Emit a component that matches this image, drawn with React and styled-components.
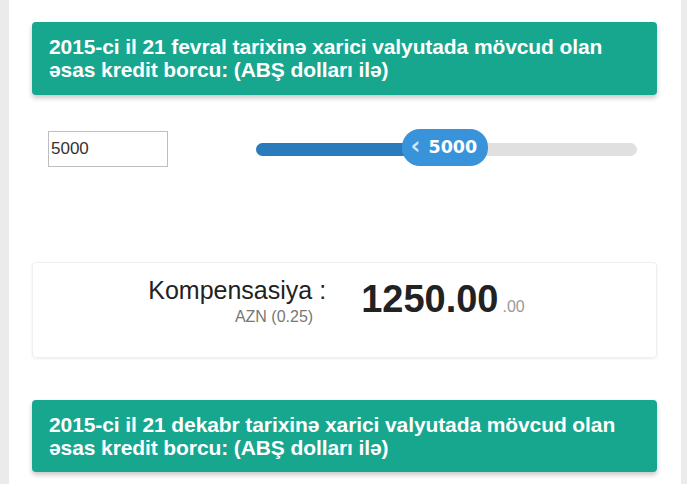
import React from "react";
import styled, { createGlobalStyle } from "styled-components";

const Global = createGlobalStyle`
  html, body { margin: 0; padding: 0; background: #ebebeb; }
  body { font-family: "Liberation Sans", Arial, sans-serif; overflow: hidden; }
  * { box-sizing: border-box; }
`;

const Panel = styled.div`
  margin: 0 6px 0 9px;
  background: #fff;
  min-height: 484px;
  padding: 22px 24px 0 23px;
  display: flex;
  flex-direction: column;
`;

const Header = styled.div`
  background: #17a68e;
  color: #fff;
  border-radius: 4px;
  box-shadow: 0 3px 5px rgba(0, 0, 0, 0.22);
  padding: ${(p) => (p.$tight ? "13px 17px 13px" : "13px 17px 14px")};
  font-weight: bold;
  font-size: 21px;
  line-height: 23px;
  letter-spacing: -0.1px;
`;

const SliderRow = styled.div`
  display: flex;
  align-items: center;
  margin-top: 33px;
  height: 39px;
`;

const NumberInput = styled.input`
  width: 120px;
  height: 36px;
  margin: 3px 0 0 16px;
  border: 1px solid #bdbdbd;
  padding: 0 2px;
  font-family: "Liberation Sans", Arial, sans-serif;
  font-size: 17px;
  color: #333;
  outline: none;
`;

const Track = styled.div`
  position: relative;
  margin-left: 88px;
  width: 381px;
  height: 13px;
  border-radius: 7px;
  background: #e0e0e0;
  margin-top: 3px;
`;

const Fill = styled.div`
  position: absolute;
  left: 0;
  top: 0;
  bottom: 0;
  border-radius: 7px 0 0 7px;
  background: #2a7bbd;
`;

const Handle = styled.div`
  position: absolute;
  top: -14px;
  height: 37px;
  width: 86px;
  border-radius: 18px;
  background: #3993da;
  color: #fff;
  display: flex;
  align-items: center;
  justify-content: center;
  gap: 8px;
  font-family: "DejaVu Sans", Verdana, sans-serif;
  font-weight: bold;
  font-size: 17.5px;
  padding-right: 2px;
`;

const Chevron = styled.span`
  color: #cfe5f8;
  font-size: 24px;
  line-height: 1;
  margin-top: -3px;
`;

const ResultCard = styled.div`
  margin-top: 95px;
  height: 96px;
  border: 1px solid #efefef;
  border-radius: 4px;
  box-shadow: 0 1px 3px rgba(0, 0, 0, 0.07);
  display: flex;
  justify-content: center;
  padding: 13px 0 0 0;
`;

const LabelCol = styled.div`
  display: flex;
  flex-direction: column;
  align-items: flex-end;
  margin-right: 35px;
  margin-left: -16px;
`;

const Label = styled.div`
  font-size: 25px;
  color: #222;
  line-height: 28px;
`;

const Sub = styled.div`
  font-size: 16px;
  color: #777;
  margin-top: 4px;
  padding-right: 13px;
`;

const Amount = styled.div`
  display: flex;
  align-items: baseline;
  margin-top: 1px;
`;

const Big = styled.span`
  font-size: 38px;
  font-weight: bold;
  color: #222;
  line-height: 44px;
`;

const Cents = styled.span`
  font-size: 16px;
  color: #999;
  margin-left: 4px;
`;

const SecondHeader = styled(Header)`
  margin-top: 42px;
`;

export default function App() {
  const value = 5000;
  const pct = 40.4;
  return (
    <>
      <Global />
      <Panel>
        <Header>
          2015-ci il 21 fevral tarixinə xarici valyutada mövcud olan
          <br />
          əsas kredit borcu: (ABŞ dolları ilə)
        </Header>
        <SliderRow>
          <NumberInput defaultValue={value} />
          <Track>
            <Fill style={{ width: `${pct}%` }} />
            <Handle style={{ left: `calc(${pct}% - 8px)` }}>
              <Chevron>‹</Chevron>
              <span>{value}</span>
            </Handle>
          </Track>
        </SliderRow>
        <ResultCard>
          <LabelCol>
            <Label>Kompensasiya :</Label>
            <Sub>AZN (0.25)</Sub>
          </LabelCol>
          <Amount>
            <Big>1250.00</Big>
            <Cents>.00</Cents>
          </Amount>
        </ResultCard>
        <SecondHeader $tight>
          2015-ci il 21 dekabr tarixinə xarici valyutada mövcud olan
          <br />
          əsas kredit borcu: (ABŞ dolları ilə)
        </SecondHeader>
      </Panel>
    </>
  );
}
